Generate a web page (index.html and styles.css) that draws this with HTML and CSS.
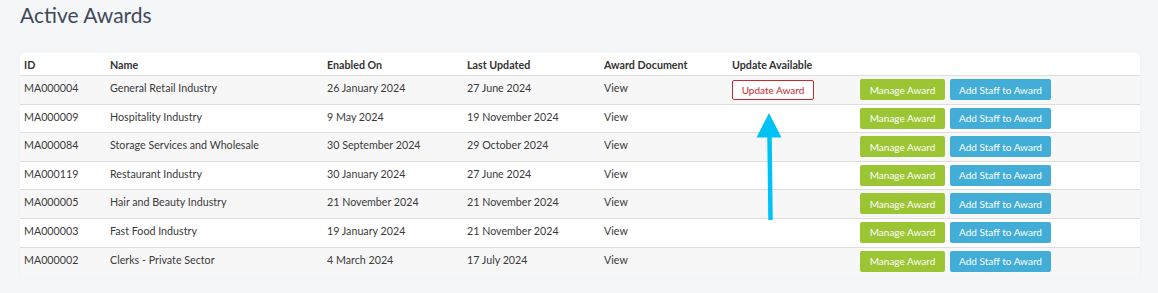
FILE: index.html
```html
<!DOCTYPE html>
<html>
<head>
<meta charset="utf-8">
<link rel="stylesheet" href="styles.css">
</head>
<body>
<h1 class="title">Active Awards</h1>
<div class="card">
  <table class="awards">
    <thead>
      <tr>
        <th class="c-id">ID</th>
        <th class="c-name">Name</th>
        <th class="c-en">Enabled On</th>
        <th class="c-lu">Last Updated</th>
        <th class="c-doc">Award Document</th>
        <th class="c-upd">Update Available</th>
        <th class="c-act"></th>
      </tr>
    </thead>
    <tbody>
      <tr>
        <td>MA000004</td><td>General Retail Industry</td><td>26 January 2024</td><td>27 June 2024</td><td>View</td>
        <td><span class="btn btn-update">Update Award</span></td>
        <td><div class="actions"><span class="btn btn-manage">Manage Award</span><span class="btn btn-staff">Add Staff to Award</span></div></td>
      </tr>
      <tr>
        <td>MA000009</td><td>Hospitality Industry</td><td>9 May 2024</td><td>19 November 2024</td><td>View</td><td></td>
        <td><div class="actions"><span class="btn btn-manage">Manage Award</span><span class="btn btn-staff">Add Staff to Award</span></div></td>
      </tr>
      <tr>
        <td>MA000084</td><td>Storage Services and Wholesale</td><td>30 September 2024</td><td>29 October 2024</td><td>View</td><td></td>
        <td><div class="actions"><span class="btn btn-manage">Manage Award</span><span class="btn btn-staff">Add Staff to Award</span></div></td>
      </tr>
      <tr>
        <td>MA000119</td><td>Restaurant Industry</td><td>30 January 2024</td><td>27 June 2024</td><td>View</td><td></td>
        <td><div class="actions"><span class="btn btn-manage">Manage Award</span><span class="btn btn-staff">Add Staff to Award</span></div></td>
      </tr>
      <tr>
        <td>MA000005</td><td>Hair and Beauty Industry</td><td>21 November 2024</td><td>21 November 2024</td><td>View</td><td></td>
        <td><div class="actions"><span class="btn btn-manage">Manage Award</span><span class="btn btn-staff">Add Staff to Award</span></div></td>
      </tr>
      <tr>
        <td>MA000003</td><td>Fast Food Industry</td><td>19 January 2024</td><td>21 November 2024</td><td>View</td><td></td>
        <td><div class="actions"><span class="btn btn-manage">Manage Award</span><span class="btn btn-staff">Add Staff to Award</span></div></td>
      </tr>
      <tr>
        <td>MA000002</td><td>Clerks - Private Sector</td><td>4 March 2024</td><td>17 July 2024</td><td>View</td><td></td>
        <td><div class="actions"><span class="btn btn-manage">Manage Award</span><span class="btn btn-staff">Add Staff to Award</span></div></td>
      </tr>
    </tbody>
  </table>
  <svg class="arrow" width="40" height="112" viewBox="0 0 40 112">
    <line x1="19.5" y1="20" x2="20.5" y2="107" stroke="#00c3f5" stroke-width="4.5"/>
    <polygon points="19,0 31.5,24.5 6.5,24.5" fill="#00c3f5"/>
  </svg>
</div>
</body>
</html>
```

FILE: styles.css
```css
html, body {
  margin: 0;
  padding: 0;
  background: #f5f6f8;
}
body {
  font-family: Lato, "Open Sans", sans-serif;
  color: #333;
  padding: 0 18px 0 20px;
}
.title {
  margin: 0;
  padding-top: 2px;
  height: 51px;
  font-size: 21px;
  font-weight: 400;
  color: #3f4a59;
  line-height: 25px;
}
.card {
  position: relative;
  width: 1120px;
  background: #fff;
  border-radius: 5px;
  box-shadow: 0 1px 3px rgba(0,0,0,0.04);
  overflow: hidden;
}
.awards {
  width: 100%;
  border-collapse: collapse;
  font-size: 10.7px;
  table-layout: fixed;
}
.awards th {
  text-align: left;
  font-weight: 700;
  color: #333;
  height: 22px;
  padding: 0 4px;
  vertical-align: middle;
  border-bottom: 1px solid #dedede;
}
.c-id { width: 78px; }
.c-name { width: 209px; }
.c-en { width: 132px; }
.c-lu { width: 129px; }
.c-doc { width: 120px; }
.c-upd { width: 120px; }
.awards td {
  height: 28.6px;
  box-sizing: border-box;
  padding: 5px 4px 0;
  vertical-align: top;
  line-height: 14px;
  color: #3a3a3a;
  border-top: 1px solid #dedede;
}
.awards tbody tr:first-child td { border-top: none; }
.awards tbody tr:nth-child(odd) { background: #f7f7f7; }
.awards tbody tr:nth-child(even) { background: #fff; }
.actions {
  display: flex;
  gap: 5px;
  margin-top: -2px;
}
.btn {
  display: inline-flex;
  align-items: center;
  justify-content: center;
  box-sizing: border-box;
  height: 21px;
  font-size: 10px;
  border-radius: 2px;
  white-space: nowrap;
}
.btn-update {
  width: 82px;
  height: 20px;
  margin-top: -1px;
  border: 1px solid #c9282f;
  color: #c9282f;
  background: #fff;
}
.btn-manage {
  width: 85px;
  background: #9bc532;
  color: #fff;
}
.btn-staff {
  width: 101px;
  background: #42aed8;
  color: #fff;
}
.arrow {
  position: absolute;
  left: 730px;
  top: 60px;
}
```
